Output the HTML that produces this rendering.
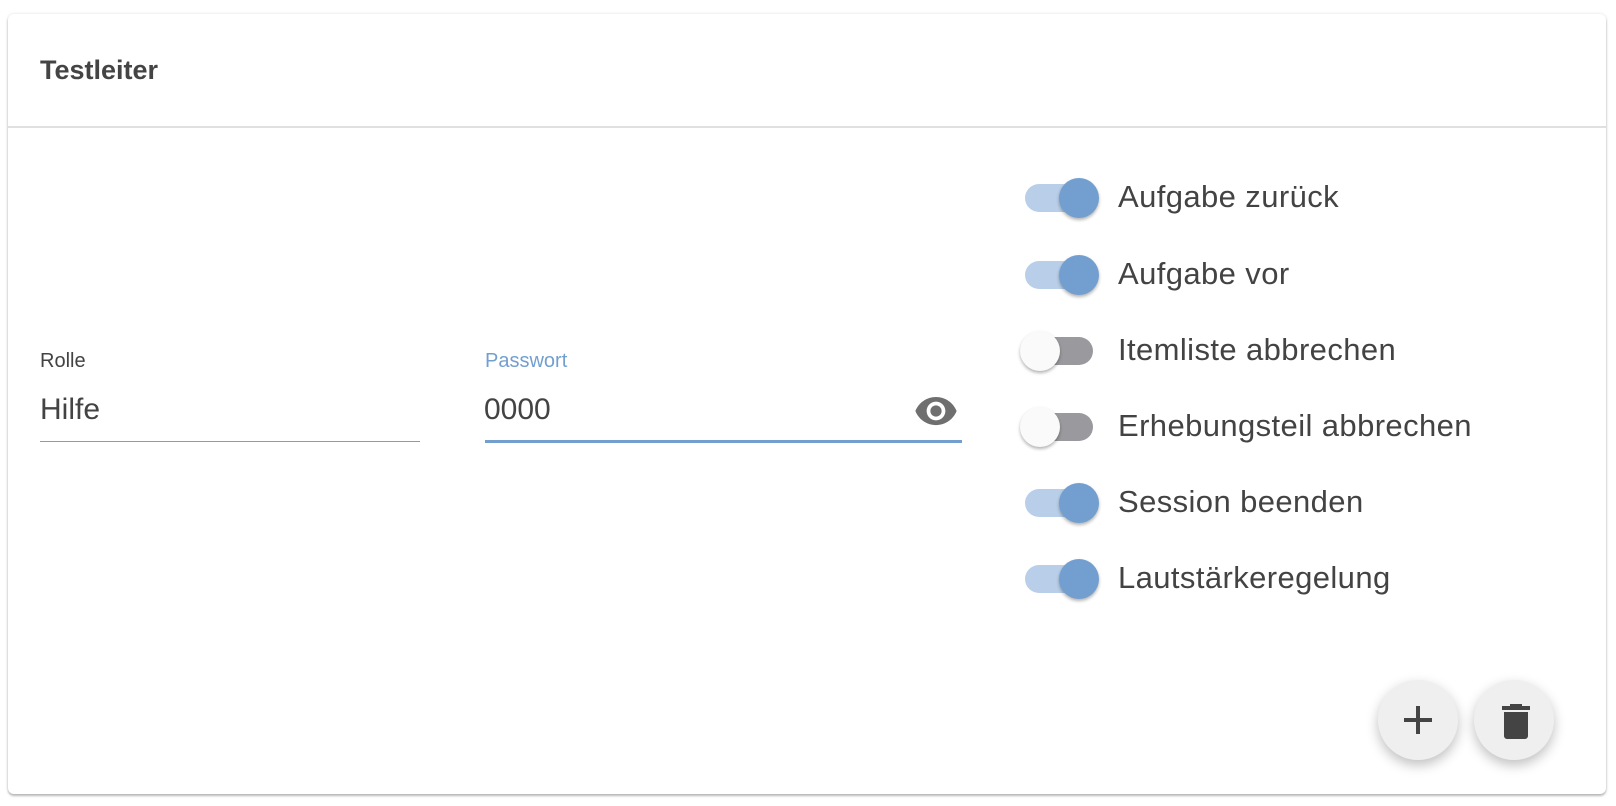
<!DOCTYPE html>
<html><head><style>
body{margin:0;background:#fff;width:1616px;height:806px;position:relative;font-family:"Liberation Sans",sans-serif;color:#434343;overflow:hidden}
.card{position:absolute;left:8px;top:14px;width:1598px;height:780px;border-radius:6px;box-shadow:0 2px 2px rgba(0,0,0,.25),0 0 3px rgba(0,0,0,.12);background:#fff}
.hdr{position:absolute;left:0;top:0;right:0;height:112px;border-bottom:2px solid #e0e0e0}
.ttl{position:absolute;left:32px;top:41px;font-size:27px;font-weight:bold;color:#444}
.a{position:absolute}
.lbl{font-size:20px}
.inp{font-size:30px}
.tr{position:absolute;width:68px;height:28px;border-radius:14px}
.kn{position:absolute;width:40px;height:40px;border-radius:50%;box-shadow:0 2px 3px rgba(0,0,0,.3)}
.t{position:absolute;left:1118px;font-size:31px;letter-spacing:0.4px;color:#434343;white-space:nowrap}
.fab{position:absolute;width:80px;height:80px;border-radius:50%;background:#efefef;box-shadow:0 5px 12px rgba(0,0,0,.25)}
</style></head><body>
<div class="card"><div class="hdr"><div class="ttl">Testleiter</div></div></div>
<div class="a lbl" style="left:40px;top:350px">Rolle</div>
<div class="a inp" style="left:40px;top:393px">Hilfe</div>
<div class="a" style="left:40px;top:441px;width:380px;height:1px;background:#999"></div>
<div class="a lbl" style="left:485px;top:350px;color:#729fd0">Passwort</div>
<div class="a inp" style="left:484px;top:393px">0000</div>
<svg class="a" style="left:914px;top:396px" width="44" height="30" viewBox="1 4 22 16"><path fill="#6f6f6f" d="M12 4.5C7 4.5 2.73 7.61 1 12c1.73 4.39 6 7.5 11 7.5s9.27-3.11 11-7.5c-1.73-4.39-6-7.5-11-7.5zM12 17c-2.76 0-5-2.24-5-5s2.24-5 5-5 5 2.24 5 5-2.240 5-5 5zm0-8c-1.66 0-3 1.34-3 3s1.34 3 3 3 3-1.34 3-3-1.34-3-3-3z"/></svg>
<div class="a" style="left:485px;top:440px;width:477px;height:3px;background:#729fd0"></div>

<div style="position:absolute;top:198px"><div class="tr" style="left:1025px;top:-14px;background:#b9cfe9"></div><div class="kn" style="left:1059px;top:-20px;background:#729fd0"></div><div class="t" style="top:-19px">Aufgabe zurück</div></div>
<div style="position:absolute;top:275px"><div class="tr" style="left:1025px;top:-14px;background:#b9cfe9"></div><div class="kn" style="left:1059px;top:-20px;background:#729fd0"></div><div class="t" style="top:-19px">Aufgabe vor</div></div>
<div style="position:absolute;top:351px"><div class="tr" style="left:1025px;top:-14px;background:#9a9a9e"></div><div class="kn" style="left:1020px;top:-20px;background:#fafafa"></div><div class="t" style="top:-19px">Itemliste abbrechen</div></div>
<div style="position:absolute;top:427px"><div class="tr" style="left:1025px;top:-14px;background:#9a9a9e"></div><div class="kn" style="left:1020px;top:-20px;background:#fafafa"></div><div class="t" style="top:-19px">Erhebungsteil abbrechen</div></div>
<div style="position:absolute;top:503px"><div class="tr" style="left:1025px;top:-14px;background:#b9cfe9"></div><div class="kn" style="left:1059px;top:-20px;background:#729fd0"></div><div class="t" style="top:-19px">Session beenden</div></div>
<div style="position:absolute;top:579px"><div class="tr" style="left:1025px;top:-14px;background:#b9cfe9"></div><div class="kn" style="left:1059px;top:-20px;background:#729fd0"></div><div class="t" style="top:-19px">Lautstärkeregelung</div></div>

<div class="fab" style="left:1378px;top:680px"><svg width="80" height="80"><path d="M40 26v28M26 40h28" stroke="#444" stroke-width="4"/></svg></div>
<div class="fab" style="left:1474px;top:680px"><svg width="80" height="80"><path fill="#444" d="M28 26h28v4H28zM36 24h12v3H36zM30 32h24v24a3 3 0 0 1-3 3H33a3 3 0 0 1-3-3z"/></svg></div>
</body></html>
